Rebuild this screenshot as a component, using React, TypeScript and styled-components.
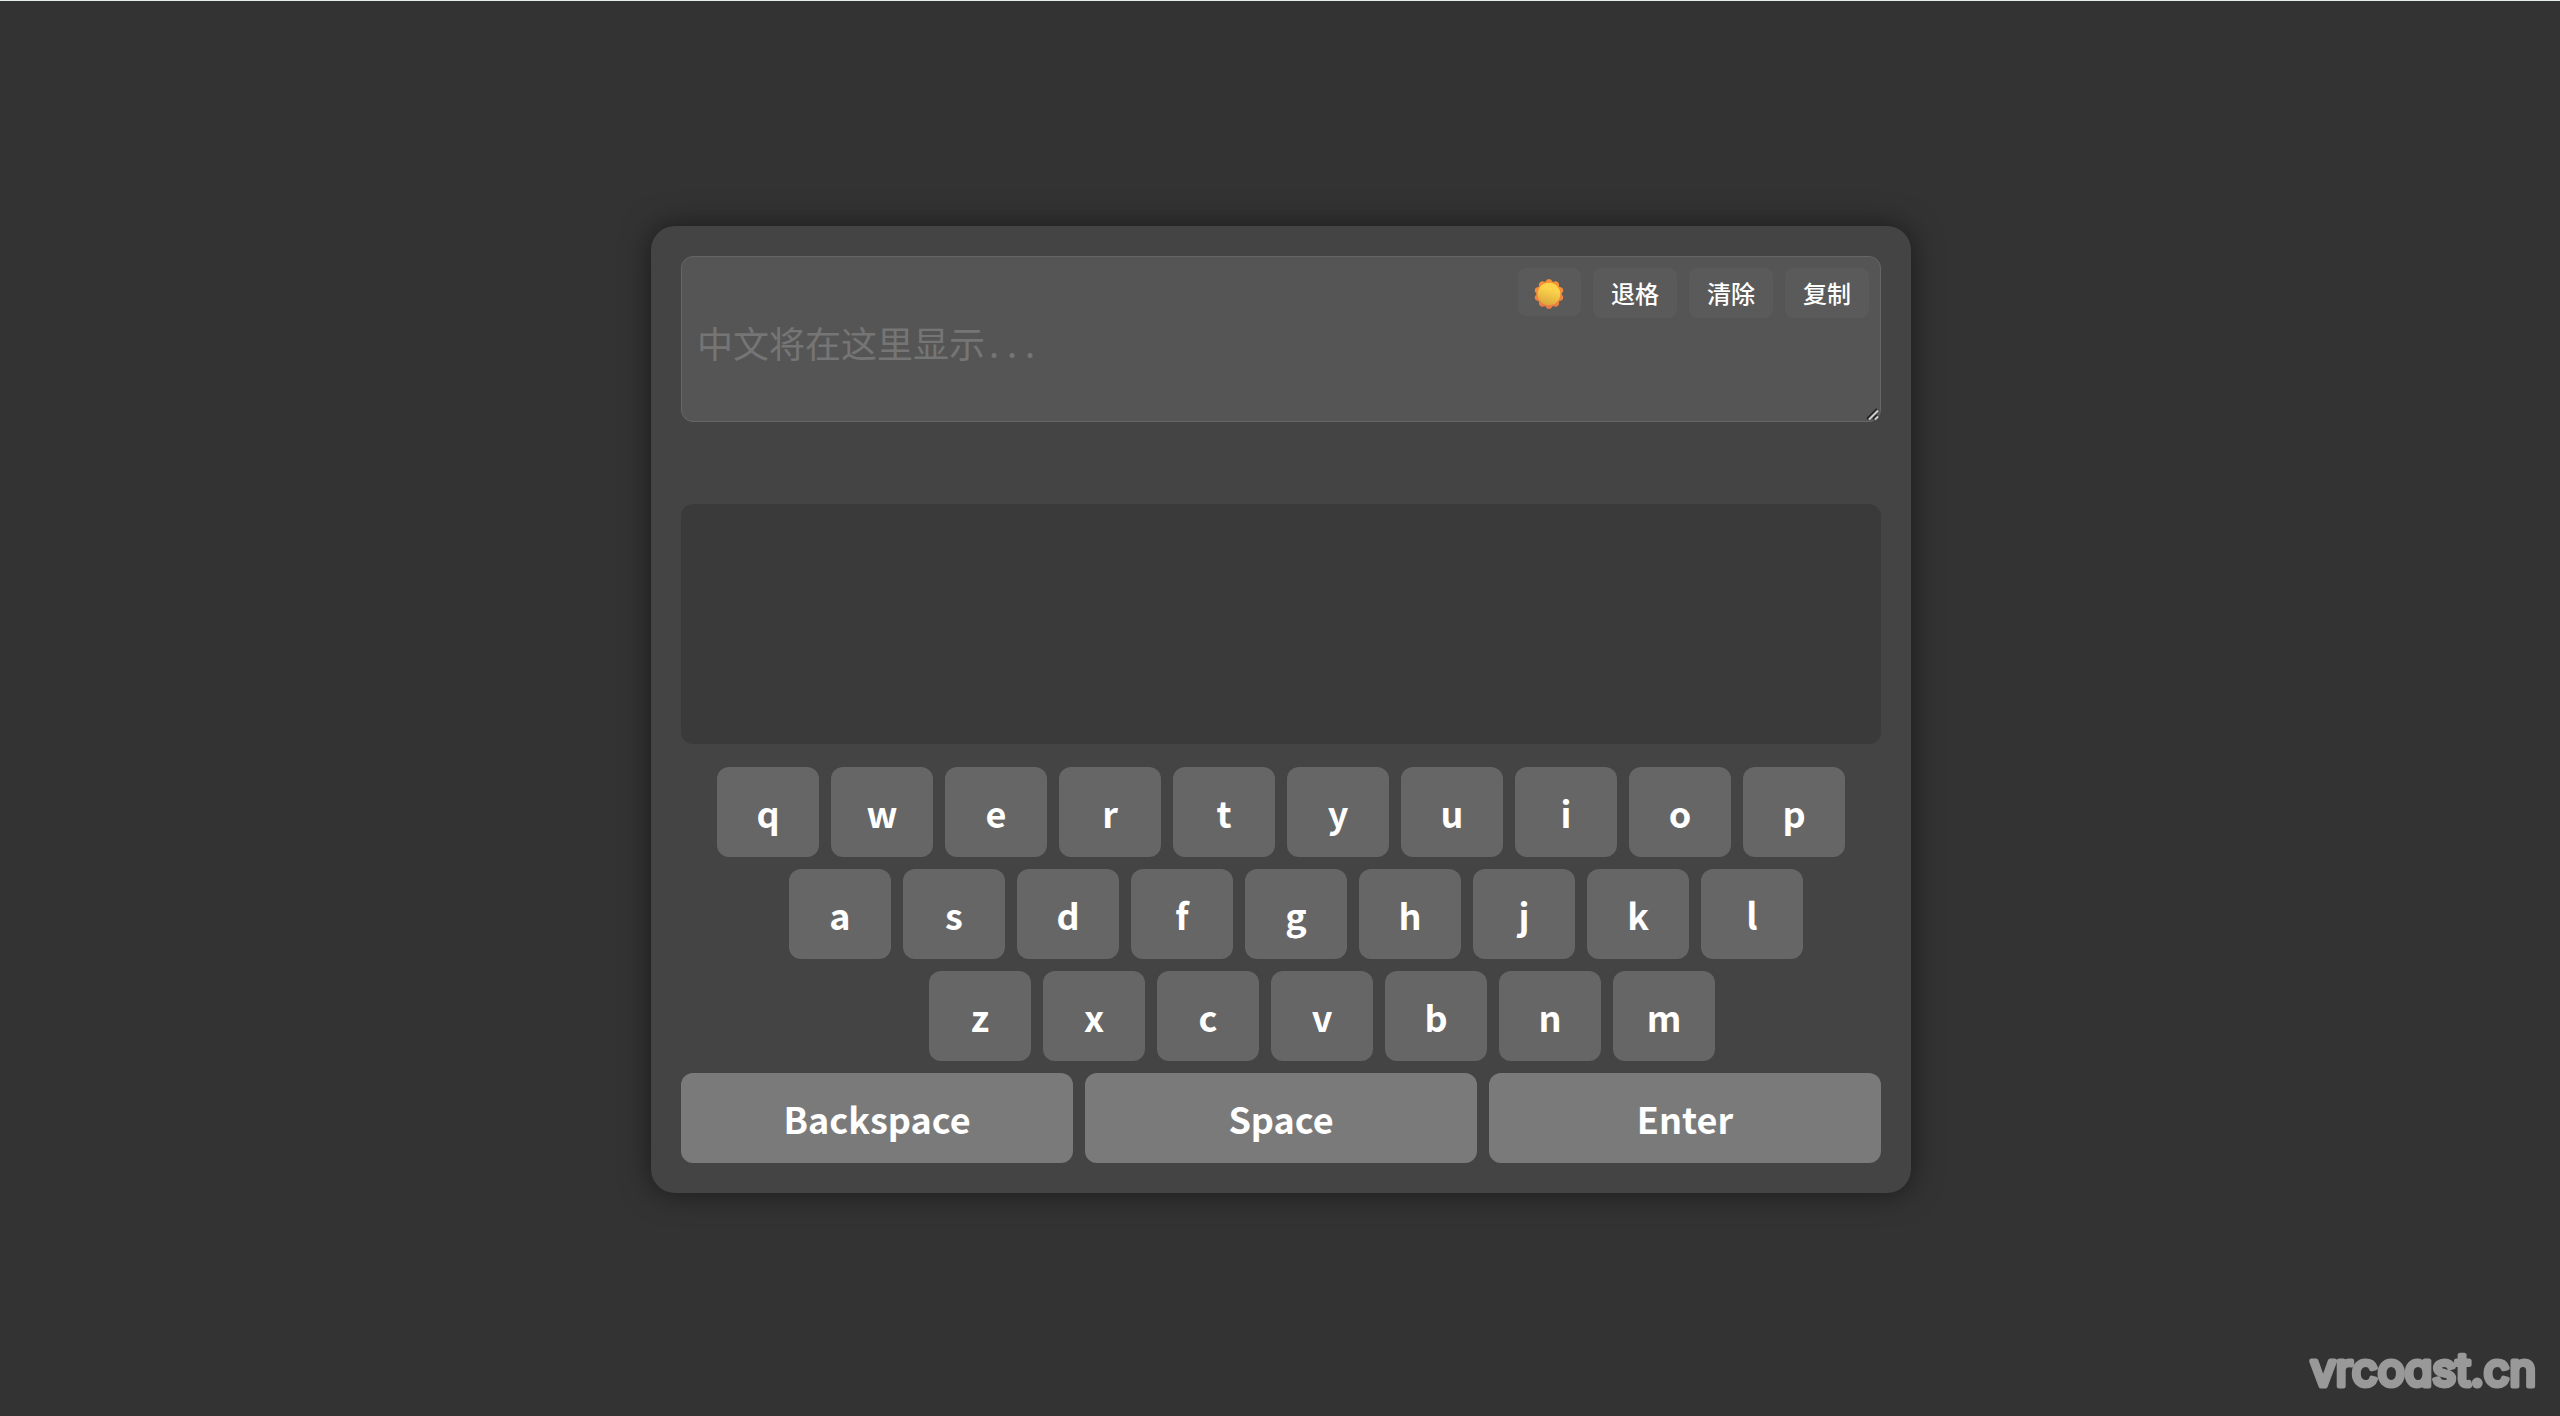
import React, { useRef, useState } from "react";
import styled, { createGlobalStyle, css } from "styled-components";

const sans = `"Noto Sans CJK SC", "Noto Sans", sans-serif`;

const GlobalStyle = createGlobalStyle`
  *, *::before, *::after { box-sizing: border-box; }
  body {
    margin: 0;
    background: #333;
    color: #fff;
    font-family: ${sans};
  }
`;

const Page = styled.main`
  display: flex;
  align-items: center;
  justify-content: center;
  min-height: 100vh;
  padding: 2px 0 0 2px;
  border-top: 1px solid #e6efea;
`;

const Panel = styled.section`
  display: flex;
  flex-direction: column;
  width: 100%;
  max-width: 1260px;
  padding: 30px;
  border-radius: 24px;
  background: #444;
  box-shadow: 0 0 30px rgba(0, 0, 0, 0.5);
`;

const Editor = styled.div`
  position: relative;
  display: flex;
`;

const Output = styled.textarea`
  flex: 1;
  height: 166px;
  padding: 58px 15px 15px;
  border: 1px solid #666;
  border-radius: 12px;
  outline: none;
  background: #555;
  color: #fff;
  font-family: "Noto Sans Mono CJK SC", "Noto Sans CJK SC", monospace;
  font-size: 36px;
  font-weight: 100;
  line-height: 54px;
  resize: none;
  &::placeholder { color: #757575; opacity: 1; }
`;

const Grip = styled.svg`
  position: absolute;
  right: 1px;
  bottom: 1px;
  pointer-events: none;
`;

const Tools = styled.div`
  position: absolute;
  top: 12px;
  right: 12px;
  display: flex;
  align-items: flex-start;
  gap: 12px;
`;

const ToolButton = styled.button`
  display: flex;
  align-items: center;
  justify-content: center;
  height: 50px;
  padding: 0 18px;
  border: 0;
  border-radius: 8px;
  background: #5a5a5a;
  color: #fff;
  font-family: ${sans};
  font-size: 24px;
  font-weight: 500;
  line-height: 36px;
  cursor: pointer;
`;

const ThemeButton = styled(ToolButton)`
  height: 48px;
  padding: 2px 16px 0;
`;

const Candidates = styled.div`
  height: 240px;
  margin-top: 82px;
  border-radius: 12px;
  background: #3a3a3a;
`;

const Keyboard = styled.div`
  display: flex;
  flex-direction: column;
  gap: 12px;
  margin-top: 23px;
`;

const KeyRow = styled.div<{ $indent?: number }>`
  display: flex;
  justify-content: center;
  gap: 12px;
  padding-left: ${(p) => p.$indent ?? 0}px;
`;

const Key = styled.button<{ $wide?: boolean }>`
  width: 102px;
  height: 90px;
  padding: 0;
  border: 0;
  border-radius: 12px;
  background: #666;
  color: #fff;
  font-family: ${sans};
  font-size: 36px;
  font-weight: 700;
  cursor: pointer;
  ${(p) => p.$wide && css`
    flex: 1;
    background: #7a7a7a;
  `}
`;

const Brand = styled.a`
  position: fixed;
  right: 16px;
  bottom: 8px;
  line-height: 0;
`;

const BrandText = styled.text`
  fill: #999;
  stroke: #999;
  stroke-width: 5px;
  stroke-linejoin: round;
  font-family: Inter, sans-serif;
  font-size: 45px;
  font-weight: 400;
  font-feature-settings: "cv11";
`;

const petals = Array.from({ length: 10 }, (_, i) => (i * Math.PI) / 5);

const SunIcon = () => (
  <svg width="31" height="31" viewBox="0 0 31 31" aria-hidden="true">
    <defs>
      <linearGradient id="sunFace" x1="0.65" y1="0" x2="0.35" y2="1">
        <stop offset="0.3" stopColor="#fcd34a" />
        <stop offset="1" stopColor="#dba63c" />
      </linearGradient>
      <linearGradient id="sunPetals" x1="0.5" y1="0" x2="0.5" y2="1">
        <stop offset="0" stopColor="#f79436" />
        <stop offset="1" stopColor="#ea7b44" />
      </linearGradient>
    </defs>
    <path
      fill="url(#sunPetals)"
      stroke="url(#sunPetals)"
      strokeWidth="3"
      strokeLinejoin="round"
      d={petals
        .map((a, i) => {
          const p = (r: number, t: number) => `${15 + r * Math.sin(t)} ${16 - r * Math.cos(t)}`;
          return `${i ? "L" : "M"}${p(13.2, a - 0.07)}L${p(13.2, a + 0.07)}L${p(10.8, a + Math.PI / 10)}`;
        })
        .join("") + "Z"}
    />
    <circle cx="15" cy="16" r="11.3" fill="url(#sunFace)" />
  </svg>
);

const rows = [
  { keys: "qwertyuiop", indent: 0 },
  { keys: "asdfghjkl", indent: 30 },
  { keys: "zxcvbnm", indent: 82 },
];

export default function App() {
  const [text, setText] = useState("");
  const field = useRef<HTMLTextAreaElement>(null);
  const add = (s: string) => setText((t) => t + s);
  const erase = () => setText((t) => t.slice(0, -1));
  const copy = () => {
    field.current?.select();
    document.execCommand("copy");
  };

  return (
    <>
      <GlobalStyle />
      <Page>
        <Panel>
          <Editor>
            <Output
              ref={field}
              aria-label="中文"
              placeholder="中文将在这里显示..."
              value={text}
              onChange={(e) => setText(e.target.value)}
            />
            <Grip width="14" height="14" viewBox="0 0 14 14" aria-hidden="true">
              <path d="M1 12L11 2M7 12L11 8" stroke="#222" strokeWidth="2" />
              <path d="M3 12.500L12 3.500M9 12.500L12 9.500" stroke="#ccc" strokeWidth="2" />
            </Grip>
            <Tools>
              <ThemeButton type="button" aria-label="主题"><SunIcon /></ThemeButton>
              <ToolButton type="button" onClick={erase}>退格</ToolButton>
              <ToolButton type="button" onClick={() => setText("")}>清除</ToolButton>
              <ToolButton type="button" onClick={copy}>复制</ToolButton>
            </Tools>
          </Editor>
          <Candidates />
          <Keyboard>
            {rows.map((row) => (
              <KeyRow key={row.keys} $indent={row.indent}>
                {row.keys.split("").map((k) => (
                  <Key key={k} type="button" onClick={() => add(k)}>{k}</Key>
                ))}
              </KeyRow>
            ))}
            <KeyRow>
              <Key $wide type="button" onClick={erase}>Backspace</Key>
              <Key $wide type="button" onClick={() => add(" ")}>Space</Key>
              <Key $wide type="button" onClick={() => add("\n")}>Enter</Key>
            </KeyRow>
          </Keyboard>
        </Panel>
        <Brand href="#">
          <svg width="256" height="64" viewBox="0 0 256 64" overflow="visible">
            <BrandText x="248" y="42" textAnchor="end">vrcoast.cn</BrandText>
          </svg>
        </Brand>
      </Page>
    </>
  );
}
